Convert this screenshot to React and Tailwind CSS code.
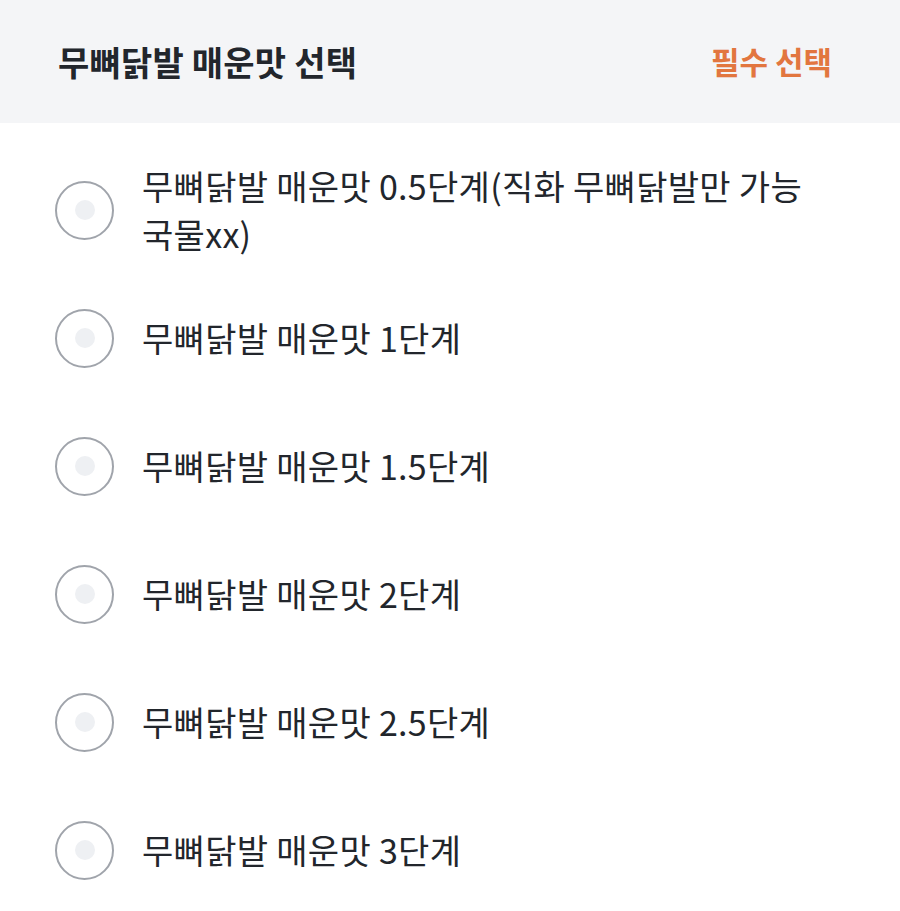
import { useState } from 'react';

const options = [
  '무뼈닭발 매운맛 0.5단계(직화 무뼈닭발만 가능 국물xx)',
  '무뼈닭발 매운맛 1단계',
  '무뼈닭발 매운맛 1.5단계',
  '무뼈닭발 매운맛 2단계',
  '무뼈닭발 매운맛 2.5단계',
  '무뼈닭발 매운맛 3단계',
];

function Radio({ checked }) {
  return (
    <span className="flex h-[59px] w-[59px] shrink-0 items-center justify-center rounded-full border-2 border-[#a0a4ab] bg-white">
      <span className={checked ? 'h-[20px] w-[20px] rounded-full bg-[#e0733f]' : 'h-[20px] w-[20px] rounded-full bg-[#eef0f3]'} />
    </span>
  );
}

export default function App() {
  const [selected, setSelected] = useState(null);

  return (
    <div className="min-h-screen bg-white text-[#22262c]" style={{ fontFamily: '"Noto Sans CJK KR", "Noto Sans", sans-serif' }}>
      {/* 헤더 */}
      <div className="flex h-[123px] items-center justify-between bg-[#f4f5f7] pl-[58px] pr-[68px]">
        <h2 className="text-[34px] font-bold tracking-[0.2px] text-[#22262c]">무뼈닭발 매운맛 선택</h2>
        <span className="text-[31px] font-bold text-[#e2763f]">필수 선택</span>
      </div>

      {/* 옵션 목록 */}
      <ul className="pt-[23px]">
        {options.map((label, i) => (
          <li
            key={i}
            onClick={() => setSelected(i)}
            className="flex h-[128px] cursor-pointer items-center gap-[28px] pl-[55px] pr-[60px]"
          >
            <Radio checked={selected === i} />
            <span className="text-[34px] leading-[48px] tracking-[0.3px] text-[#22262c]">{label}</span>
          </li>
        ))}
      </ul>
    </div>
  );
}
